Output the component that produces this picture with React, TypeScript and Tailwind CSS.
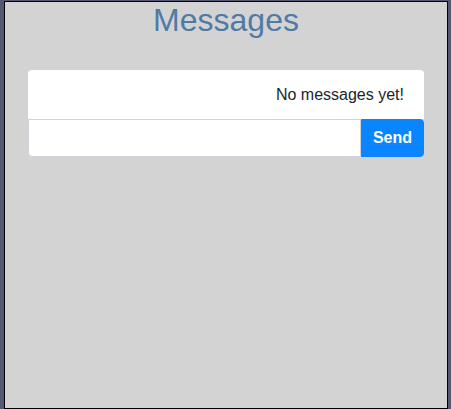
// App.tsx
import { useState } from 'react'

export default function App() {
  const [text, setText] = useState('')
  const messages: string[] = []

  return (
    <div className="min-h-screen bg-[#555871] pl-[4px] pr-[3px] pt-[1px] font-['Liberation_Sans',Arial,sans-serif]">
      <div className="h-[408px] border border-black bg-[#d3d3d3]">
        {/* TITULO */}
        <h1 className="m-0 text-center text-[32px] leading-[37px] text-[#4f7aa6]">Messages</h1>

        {/* CAJA DE MENSAJES */}
        <div className="mx-auto mt-[31px] w-[396px]">
          <div className="rounded-t-[4px] bg-white px-[20px] pt-[15px] pb-[15px] text-right text-[16px] leading-[19px] text-[#212529]">
            {messages.length === 0 ? 'No messages yet!' : messages.map((m, i) => <p key={i}>{m}</p>)}
          </div>
          <div className="flex">
            <input
              value={text}
              onChange={(e) => setText(e.target.value)}
              className="h-[38px] flex-1 rounded-bl-[4px] border border-[#ced4da] bg-white px-3 text-[16px] outline-none"
            />
            <button className="h-[38px] rounded-r-[4px] border border-[#0a84ff] bg-[#0a84ff] px-[11px] text-[16px] font-bold text-white">
              Send
            </button>
          </div>
        </div>
      </div>
    </div>
  )
}
